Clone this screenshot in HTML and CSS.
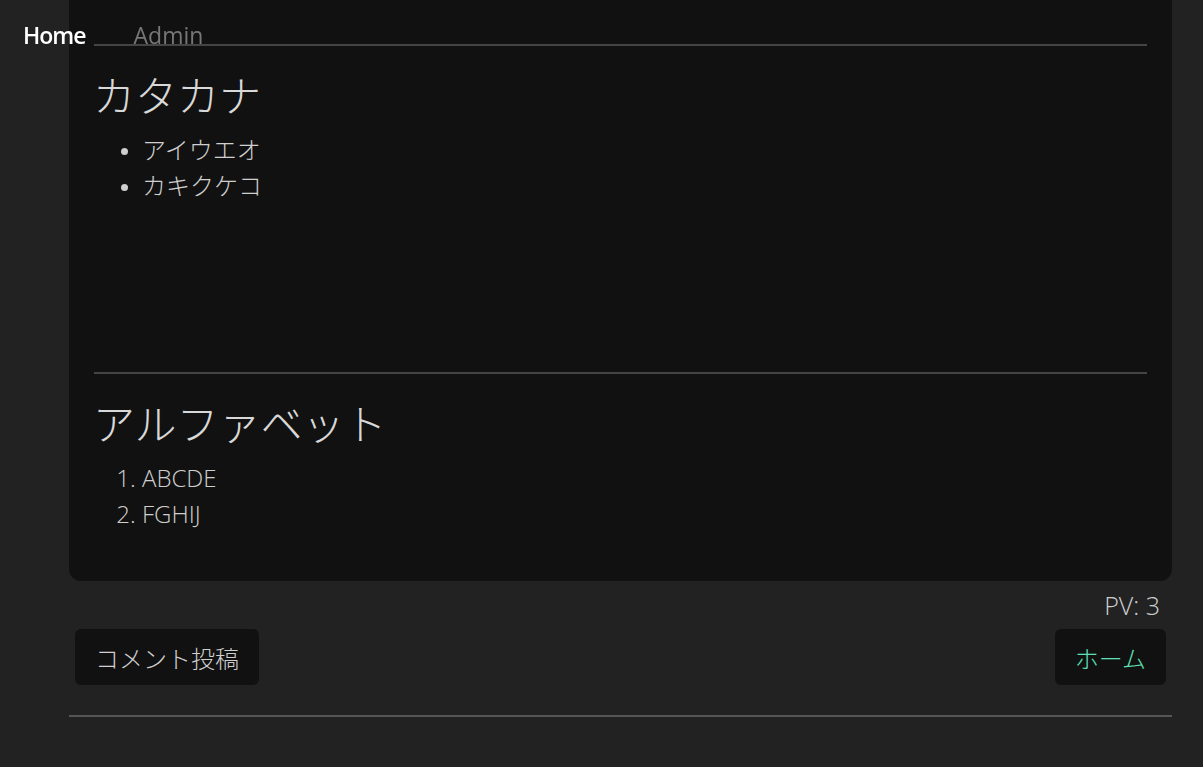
FILE: index.html
```
<!DOCTYPE html>
<html lang="ja">

<head>
    <meta charset="UTF-8">
    <meta name="viewport" content="width=device-width, initial-scale=1.0">
    <title>カタカナ</title>
    <link rel="stylesheet" href="styles.css">
</head>

<body>
    <header class="topnav">
        <a href="#" class="nav-link active">Home</a>
        <a href="#" class="nav-link">Admin</a>
    </header>

    <main class="page">
        <article class="card">
            <section class="block block-tall">
                <h2>カタカナ</h2>
                <ul>
                    <li>アイウエオ</li>
                    <li>カキクケコ</li>
                </ul>
            </section>

            <section class="block">
                <h2>アルファベット</h2>
                <ol>
                    <li>ABCDE</li>
                    <li>FGHIJ</li>
                </ol>
            </section>
        </article>

        <div class="pv">PV: 3</div>

        <div class="actions">
            <button class="btn">コメント投稿</button>
            <button class="btn btn-home">ホーム</button>
        </div>

        <hr class="footer-rule">
    </main>
</body>

</html>
```

FILE: styles.css
```
* {
    margin: 0;
    padding: 0;
    box-sizing: border-box;
}

body {
    font-family: "Open Sans", "Noto Sans CJK JP", sans-serif;
    font-weight: 300;
    color: #cfcfcf;
    background-color: #222;
    font-size: 24px;
    line-height: 36px;
}

/* Top navigation */
.topnav {
    position: fixed;
    top: 0;
    left: 0;
    display: flex;
    gap: 48px;
    padding: 17px 0 0 23px;
    z-index: 10;
}

.nav-link {
    color: #777;
    text-decoration: none;
    font-size: 23px;
    font-weight: 400;
    line-height: 36px;
}

.nav-link.active {
    color: #fff;
    font-weight: 600;
    letter-spacing: -1px;
}

.page {
    width: 1103px;
    margin-left: 69px;
}

/* Card */
.card {
    background: #111;
    border-radius: 12px;
    margin-top: -12px;
    padding: 56px 25px 49px;
}

.block {
    border-top: 2px solid #444;
}

.block-tall {
    min-height: 328px;
}

.block h2 {
    font-size: 42px;
    font-weight: 300;
    line-height: 48px;
    margin: 26px 0 12px -1px;
    color: #d8d8d8;
}

.block ul,
.block ol {
    padding-left: 48px;
}

.block ul li::marker {
    font-size: 20px;
}

/* Below card */
.pv {
    text-align: right;
    padding: 6px 12px 0 0;
    line-height: 36px;
    font-size: 25px;
}

.actions {
    display: flex;
    justify-content: space-between;
    padding: 6px 6px 0;
}

.btn {
    font-family: inherit;
    font-weight: 300;
    font-size: 24px;
    color: #cfcfcf;
    background: #111;
    border: none;
    border-radius: 6px;
    height: 56px;
    padding: 0 20px;
    cursor: pointer;
}

.btn-home {
    color: #5fe0b6;
}

.footer-rule {
    border: none;
    border-top: 2px solid #555;
    margin-top: 30px;
}
```
